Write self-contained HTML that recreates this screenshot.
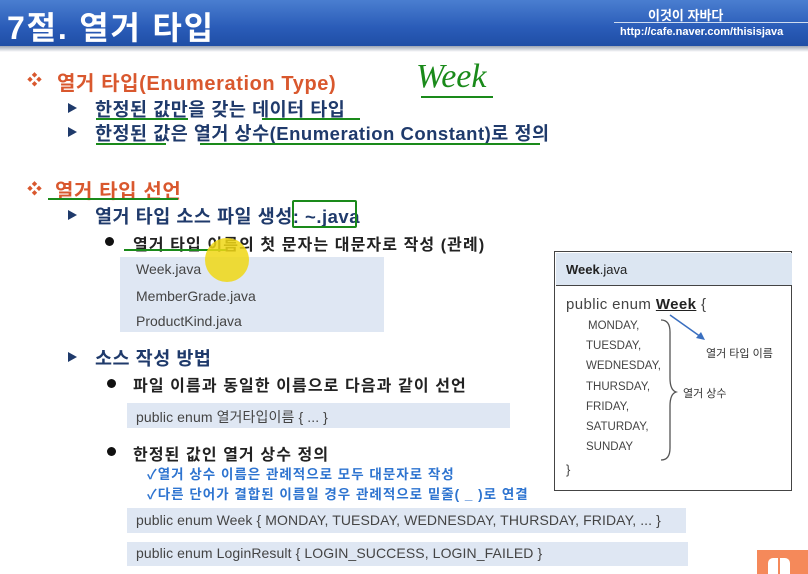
<!DOCTYPE html>
<html><head><meta charset="utf-8"><style>
body{margin:0;width:808px;height:574px;overflow:hidden;background:#fff;position:relative;font-family:"Liberation Sans","Noto Sans CJK KR",sans-serif}
.a{position:absolute;white-space:nowrap}
.hd{left:0;top:0;width:808px;height:46px;background:linear-gradient(#4a7ed0,#2a5cb8 60%,#1f4ea6)}
.sh{left:0;top:46px;width:808px;height:6px;background:linear-gradient(#9aa4b4,#fff)}
.o{color:#d9582e;font-weight:bold;font-size:20px;letter-spacing:.6px}
.n{color:#1f3a6b;font-weight:bold;font-size:18.5px;letter-spacing:.5px}
.k{color:#222;font-weight:bold;font-size:16px;letter-spacing:1.1px}
.g{color:#444;font-size:14px}
.b{color:#2e74d0;font-weight:bold;font-size:13.5px;letter-spacing:1px}
.bx{background:#dfe7f3}
.gl{background:#1a8a1a;height:2px}
.c{font-size:11.5px;color:#444}
.ar{width:0;height:0;border-left:9px solid #1f3a6b;border-top:5px solid transparent;border-bottom:5px solid transparent}
.dot{width:9px;height:9px;border-radius:50%;background:#111}
.dia{color:#d9582e;font-size:15px}
.cd{font-size:14px;color:#444;letter-spacing:.1px}
</style></head><body>
<div class="a hd"></div><div class="a sh"></div>
<div class="a" style="left:7px;top:3px;color:#fff;font-weight:bold;font-size:32px;letter-spacing:1.8px">7절. 열거 타입</div>
<div class="a" style="left:648px;top:5px;color:#fff;font-weight:bold;font-size:13px">이것이 자바다</div>
<div class="a" style="left:614px;top:22px;width:194px;height:1px;background:#cfdcf0"></div>
<div class="a" style="left:620px;top:26px;color:#fff;font-weight:bold;font-size:11px">http://cafe.naver.com/thisisjava</div>

<div class="a dia" style="left:27px;top:69px">❖</div>
<div class="a o" style="left:57px;top:67px">열거 타입(Enumeration Type)</div>
<div class="a" style="left:416px;top:58px;color:#1a8a1a;font-size:34px;font-style:italic;font-family:'Liberation Serif',serif">Week</div>
<div class="a gl" style="left:421px;top:96px;width:72px"></div>

<div class="a ar" style="left:68px;top:103px"></div>
<div class="a n" style="left:95px;top:96px">한정된 값만을 갖는 데이터 타입</div>
<div class="a gl" style="left:96px;top:118px;width:92px"></div>
<div class="a gl" style="left:262px;top:118px;width:98px"></div>
<div class="a ar" style="left:68px;top:127px"></div>
<div class="a n" style="left:95px;top:120px">한정된 값은 열거 상수(Enumeration Constant)로 정의</div>
<div class="a gl" style="left:96px;top:143px;width:70px"></div>
<div class="a gl" style="left:200px;top:143px;width:340px"></div>

<div class="a dia" style="left:27px;top:178px">❖</div>
<div class="a o" style="left:55px;top:175px">열거 타입 선언</div>
<div class="a gl" style="left:48px;top:198px;width:130px"></div>
<div class="a ar" style="left:68px;top:210px"></div>
<div class="a n" style="left:95px;top:203px">열거 타입 소스 파일 생성: ~.java</div>
<div class="a" style="left:292px;top:200px;width:61px;height:24px;border:2px solid #1a8a1a;border-radius:2px"></div>
<div class="a dot" style="left:105px;top:237px"></div>
<div class="a k" style="left:133px;top:231px">열거 타입 이름의 첫 문자는 대문자로 작성 (관례)</div>
<div class="a gl" style="left:124px;top:249px;width:102px"></div>
<div class="a bx" style="left:120px;top:257px;width:264px;height:75px"></div>
<div class="a" style="left:205px;top:238px;width:44px;height:44px;border-radius:50%;background:rgba(240,215,20,.85)"></div>
<div class="a g" style="left:136px;top:261px">Week.java</div>
<div class="a g" style="left:136px;top:288px">MemberGrade.java</div>
<div class="a g" style="left:136px;top:313px">ProductKind.java</div>

<div class="a ar" style="left:68px;top:352px"></div>
<div class="a n" style="left:95px;top:345px">소스 작성 방법</div>
<div class="a dot" style="left:107px;top:379px"></div>
<div class="a k" style="left:133px;top:372px">파일 이름과 동일한 이름으로 다음과 같이 선언</div>
<div class="a bx" style="left:127px;top:403px;width:383px;height:25px"></div>
<div class="a cd" style="left:136px;top:407px">public enum 열거타입이름 { ... }</div>
<div class="a dot" style="left:107px;top:447px"></div>
<div class="a k" style="left:133px;top:441px">한정된 값인 열거 상수 정의</div>
<div class="a b" style="left:147px;top:463px">✓열거 상수 이름은 관례적으로 모두 대문자로 작성</div>
<div class="a b" style="left:147px;top:483px">✓다른 단어가 결합된 이름일 경우 관례적으로 밑줄( _ )로 연결</div>
<div class="a bx" style="left:127px;top:508px;width:559px;height:25px"></div>
<div class="a cd" style="left:136px;top:512px">public enum Week { MONDAY, TUESDAY, WEDNESDAY, THURSDAY, FRIDAY, ... }</div>
<div class="a bx" style="left:127px;top:542px;width:561px;height:24px"></div>
<div class="a cd" style="left:136px;top:545px">public enum LoginResult { LOGIN_SUCCESS, LOGIN_FAILED }</div>

<div class="a" style="left:554px;top:251px;width:236px;height:238px;border:1.5px solid #444"></div>
<div class="a" style="left:555.5px;top:252.5px;width:236px;height:32px;background:#dce6f2;border-bottom:1.5px solid #444"></div>
<div class="a" style="left:566px;top:262px;font-size:13px;color:#222"><b>Week</b>.java</div>
<div class="a" style="left:566px;top:296px;font-size:15px;color:#444;letter-spacing:.4px">public enum <b style="color:#222;text-decoration:underline">Week</b> {</div>
<div class="a c" style="left:588px;top:320px">MONDAY,</div>
<div class="a c" style="left:586px;top:340px">TUESDAY,</div>
<div class="a c" style="left:586px;top:360px">WEDNESDAY,</div>
<div class="a c" style="left:586px;top:381px">THURSDAY,</div>
<div class="a c" style="left:586px;top:401px">FRIDAY,</div>
<div class="a c" style="left:586px;top:421px">SATURDAY,</div>
<div class="a c" style="left:586px;top:441px">SUNDAY</div>
<div class="a" style="left:566px;top:462px;font-size:13px;color:#444">}</div>
<svg class="a" style="left:540px;top:240px" width="268" height="240">
<path d="M121 80 Q130 80 130 92 L130 138 Q130 150 136 152 Q130 154 130 166 L130 208 Q130 220 121 220" fill="none" stroke="#555" stroke-width="1.3"/>
<line x1="130" y1="75" x2="161" y2="97" stroke="#3a6fc0" stroke-width="1.5"/>
<path d="M165 100 L156 98 L161 92 Z" fill="#3a6fc0"/>
</svg>
<div class="a" style="left:706px;top:345px;font-size:11px;color:#333">열거 타입 이름</div>
<div class="a" style="left:683px;top:385px;font-size:11px;color:#333">열거 상수</div>
<div class="a" style="left:757px;top:550px;width:51px;height:24px;background:#f5895a"></div>
<div class="a" style="left:768px;top:558px;width:22px;height:16px;background:#fff;border-radius:5px 5px 0 0"></div>
<div class="a" style="left:778px;top:558px;width:2px;height:16px;background:#f5895a"></div>
</body></html>
